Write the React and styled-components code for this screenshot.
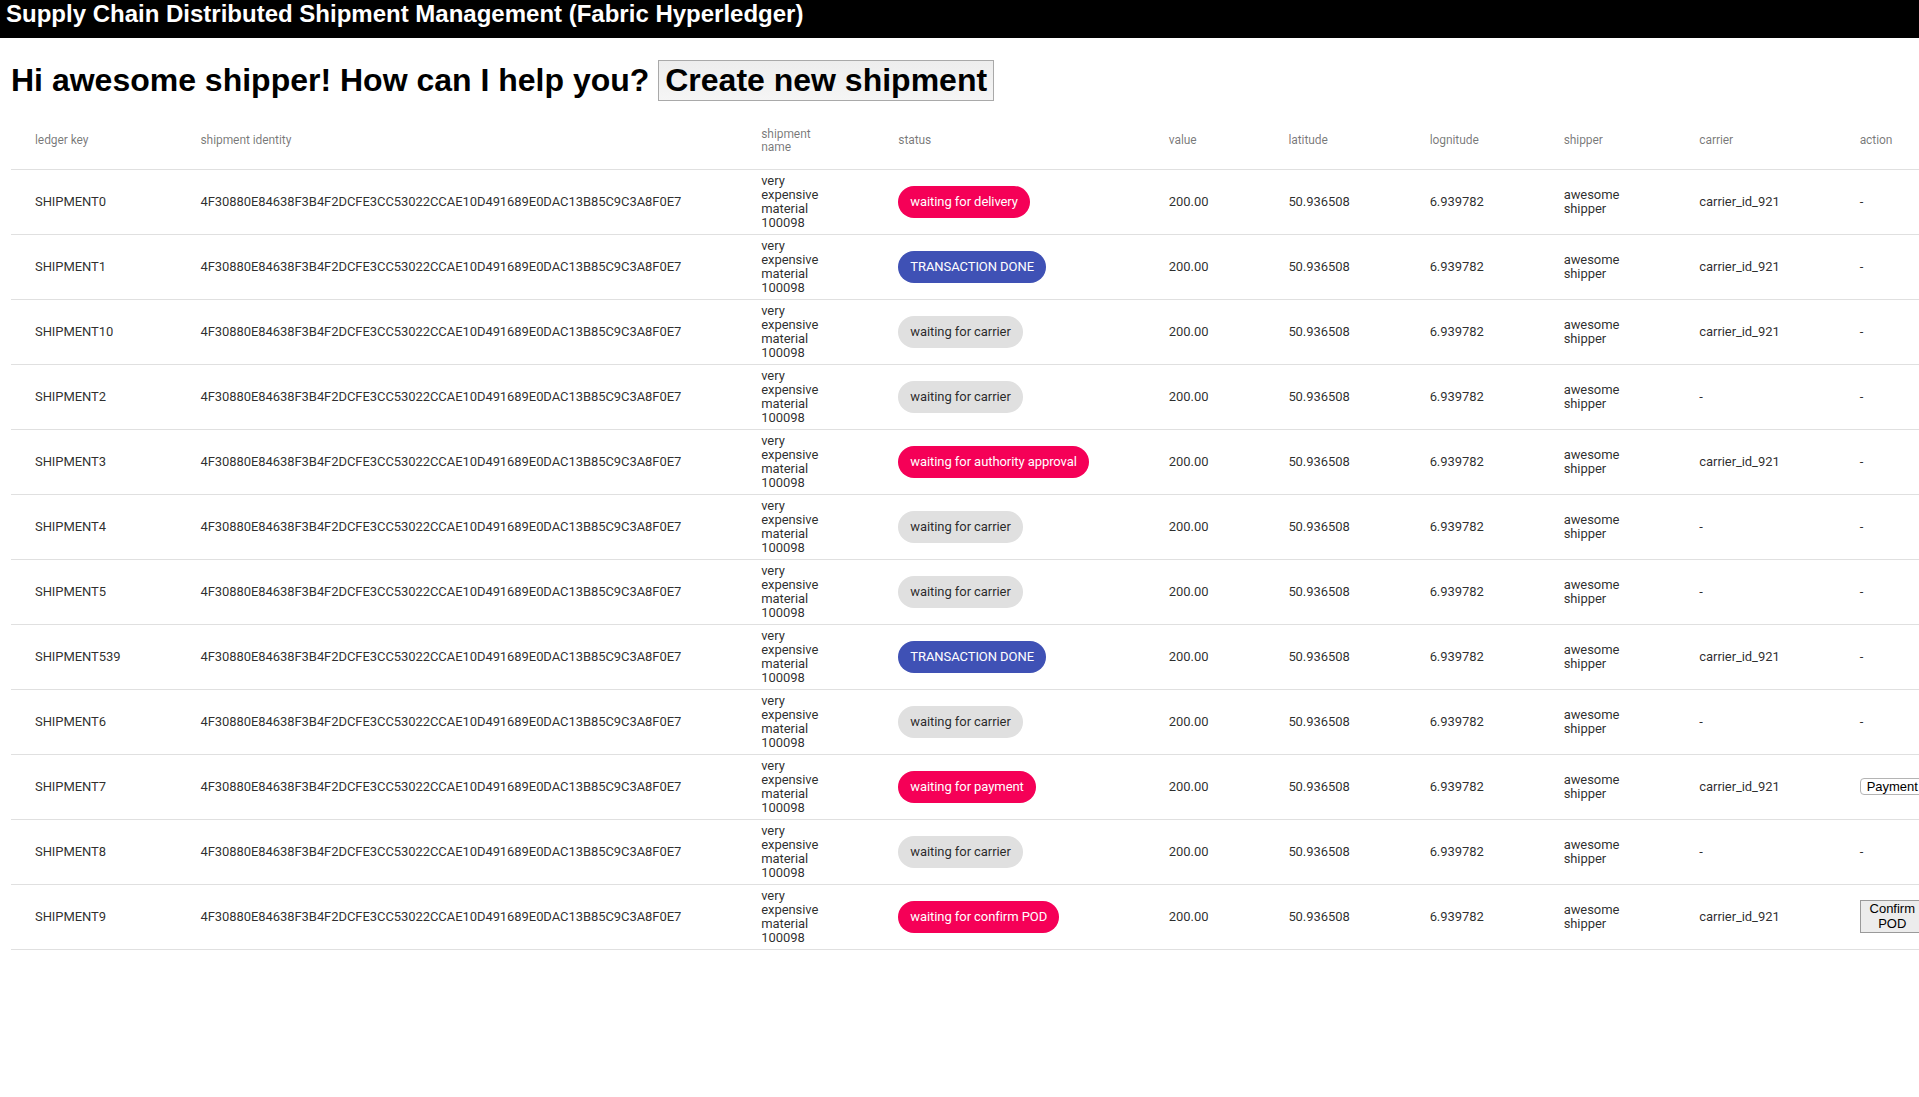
import styled, { createGlobalStyle } from 'styled-components';

const GlobalStyle = createGlobalStyle`
    body {
        margin: 0;
        background: #fff;
        font-family: "Liberation Sans", Arial, sans-serif;
        overflow-x: hidden;
    }
`;

const HASH = '4F30880E84638F3B4F2DCFE3CC53022CCAE10D491689E0DAC13B85C9C3A8F0E7';

// 원장 데이터 (스크린샷 순서 그대로)
const shipments = [
    { key: 'SHIPMENT0', status: 'waiting for delivery', tone: 'pink', carrier: 'carrier_id_921' },
    { key: 'SHIPMENT1', status: 'TRANSACTION DONE', tone: 'blue', carrier: 'carrier_id_921' },
    { key: 'SHIPMENT10', status: 'waiting for carrier', tone: 'grey', carrier: 'carrier_id_921' },
    { key: 'SHIPMENT2', status: 'waiting for carrier', tone: 'grey', carrier: '-' },
    { key: 'SHIPMENT3', status: 'waiting for authority approval', tone: 'pink', carrier: 'carrier_id_921' },
    { key: 'SHIPMENT4', status: 'waiting for carrier', tone: 'grey', carrier: '-' },
    { key: 'SHIPMENT5', status: 'waiting for carrier', tone: 'grey', carrier: '-' },
    { key: 'SHIPMENT539', status: 'TRANSACTION DONE', tone: 'blue', carrier: 'carrier_id_921' },
    { key: 'SHIPMENT6', status: 'waiting for carrier', tone: 'grey', carrier: '-' },
    { key: 'SHIPMENT7', status: 'waiting for payment', tone: 'pink', carrier: 'carrier_id_921', action: 'payment' },
    { key: 'SHIPMENT8', status: 'waiting for carrier', tone: 'grey', carrier: '-' },
    { key: 'SHIPMENT9', status: 'waiting for confirm POD', tone: 'pink', carrier: 'carrier_id_921', action: 'pod' },
];

const columns = [
    'ledger key',
    'shipment identity',
    'shipment name',
    'status',
    'value',
    'latitude',
    'lognitude',
    'shipper',
    'carrier',
    'action',
];

const App = () => {
    return (
        <>
            <GlobalStyle />
            <TopBar>Supply Chain Distributed Shipment Management (Fabric Hyperledger)</TopBar>
            <Main>
                <Greeting>
                    Hi awesome shipper! How can I help you? <CreateBtn type="button">Create new shipment</CreateBtn>
                </Greeting>
                <Table>
                    <thead>
                        <HeadRow>
                            {columns.map((c) => (
                                <Th key={c}>{c}</Th>
                            ))}
                        </HeadRow>
                    </thead>
                    <tbody>
                        {shipments.map((s) => (
                            <BodyRow key={s.key}>
                                <Td>{s.key}</Td>
                                <Td>{HASH}</Td>
                                <Td>very expensive material 100098</Td>
                                <Td>
                                    <Chip tone={s.tone}>{s.status}</Chip>
                                </Td>
                                <Td>200.00</Td>
                                <Td>50.936508</Td>
                                <Td>6.939782</Td>
                                <Td>awesome shipper</Td>
                                <Td>{s.carrier}</Td>
                                <Td>
                                    {s.action === 'payment' && <ActionBtn round type="button">Payment</ActionBtn>}
                                    {s.action === 'pod' && <ActionBtn type="button">Confirm POD</ActionBtn>}
                                    {!s.action && '-'}
                                </Td>
                            </BodyRow>
                        ))}
                    </tbody>
                </Table>
            </Main>
        </>
    );
};

export default App;

const TopBar = styled.header`
    box-sizing: border-box;
    height: 38px;
    padding: 0 6px;
    background: #000;
    color: #fff;
    font-size: 24px;
    font-weight: bold;
    line-height: 27px;
    white-space: nowrap;
`;

const Main = styled.main`
    padding: 0 0 0 11px;
`;

const Greeting = styled.h1`
    margin: 22px 0 12px;
    font-size: 32px;
    font-weight: bold;
    color: #000;
    white-space: nowrap;
`;

const CreateBtn = styled.button`
    font: inherit;
    color: #000;
    padding: 1px 6px;
    border: 1px solid #a9a9a9;
    border-radius: 0;
    background: linear-gradient(#ededed, #f5f5f5);
    cursor: pointer;
`;

const Table = styled.table`
    width: 100%;
    border-collapse: collapse;
    border-spacing: 0;
    font-family: Roboto, "Helvetica Neue", Arial, sans-serif;
    letter-spacing: -0.07px;
`;

const HeadRow = styled.tr`
    height: 56px;
`;

const BodyRow = styled.tr`
    height: 48px;
`;

const Th = styled.th`
    text-align: left;
    vertical-align: middle;
    padding: 4px 56px 4px 24px;
    font-size: 12px;
    font-weight: 400;
    line-height: 12.8px;
    color: rgba(0, 0, 0, 0.54);
    border-bottom: 1px solid #e0e0e0;

    &:last-child {
        padding-right: 24px;
    }
`;

const Td = styled.td`
    text-align: left;
    vertical-align: middle;
    padding: 4px 56px 4px 24px;
    font-size: 13px;
    font-weight: 400;
    line-height: 14px;
    color: rgba(0, 0, 0, 0.84);
    border-bottom: 1px solid #e0e0e0;

    &:last-child {
        padding-right: 24px;
    }
`;

const chipColors = {
    pink: { bg: '#f50057', fg: '#fff' },
    blue: { bg: '#3f51b5', fg: '#fff' },
    grey: { bg: '#e0e0e0', fg: 'rgba(0, 0, 0, 0.84)' },
};

const Chip = styled.span`
    display: inline-flex;
    align-items: center;
    height: 32px;
    padding: 0 12px;
    border-radius: 16px;
    font-size: 13px;
    white-space: nowrap;
    background: ${(p) => chipColors[p.tone].bg};
    color: ${(p) => chipColors[p.tone].fg};
`;

const ActionBtn = styled.button`
    font-family: "Liberation Sans", Arial, sans-serif;
    font-size: 13px;
    letter-spacing: 0;
    line-height: ${(p) => (p.round ? '15px' : '14.5px')};
    padding: ${(p) => (p.round ? '0 6px' : '1px 6px')};
    color: #000;
    border: 1px solid ${(p) => (p.round ? '#b4b4b4' : '#9a9a9a')};
    border-radius: ${(p) => (p.round ? '4px' : '0')};
    background: ${(p) => (p.round ? '#fff' : '#ececec')};
    cursor: pointer;
`;
